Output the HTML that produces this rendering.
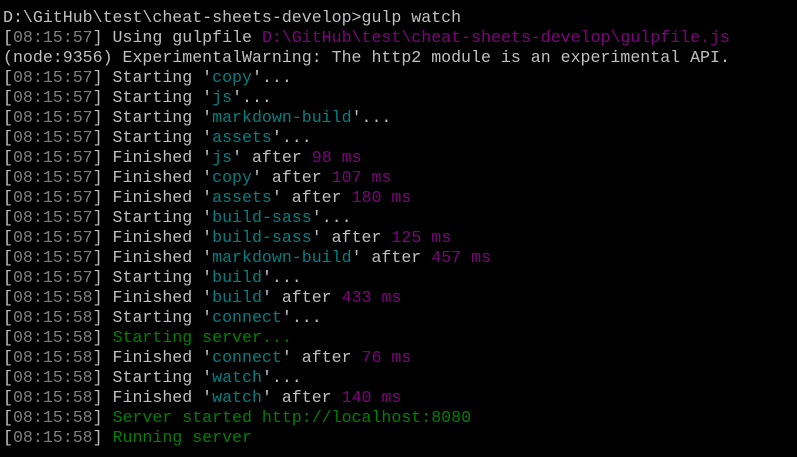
<html><head><style>
body{margin:0;background:#000;width:797px;height:457px;overflow:hidden}
pre{margin:0;position:absolute;left:3px;top:8px;font-family:"Liberation Mono",monospace;font-size:16.6px;line-height:20px;color:#c0c0c0}
.t{color:#808080}.m{color:#800080}.c{color:#008080}.g{color:#008000}
</style></head><body><pre>D:\GitHub\test\cheat-sheets-develop>gulp watch
[<span class="t">08:15:57</span>] Using gulpfile <span class="m">D:\GitHub\test\cheat-sheets-develop\gulpfile.js</span>
(node:9356) ExperimentalWarning: The http2 module is an experimental API.
[<span class="t">08:15:57</span>] Starting '<span class="c">copy</span>'...
[<span class="t">08:15:57</span>] Starting '<span class="c">js</span>'...
[<span class="t">08:15:57</span>] Starting '<span class="c">markdown-build</span>'...
[<span class="t">08:15:57</span>] Starting '<span class="c">assets</span>'...
[<span class="t">08:15:57</span>] Finished '<span class="c">js</span>' after <span class="m">98 ms</span>
[<span class="t">08:15:57</span>] Finished '<span class="c">copy</span>' after <span class="m">107 ms</span>
[<span class="t">08:15:57</span>] Finished '<span class="c">assets</span>' after <span class="m">180 ms</span>
[<span class="t">08:15:57</span>] Starting '<span class="c">build-sass</span>'...
[<span class="t">08:15:57</span>] Finished '<span class="c">build-sass</span>' after <span class="m">125 ms</span>
[<span class="t">08:15:57</span>] Finished '<span class="c">markdown-build</span>' after <span class="m">457 ms</span>
[<span class="t">08:15:57</span>] Starting '<span class="c">build</span>'...
[<span class="t">08:15:58</span>] Finished '<span class="c">build</span>' after <span class="m">433 ms</span>
[<span class="t">08:15:58</span>] Starting '<span class="c">connect</span>'...
[<span class="t">08:15:58</span>] <span class="g">Starting server...</span>
[<span class="t">08:15:58</span>] Finished '<span class="c">connect</span>' after <span class="m">76 ms</span>
[<span class="t">08:15:58</span>] Starting '<span class="c">watch</span>'...
[<span class="t">08:15:58</span>] Finished '<span class="c">watch</span>' after <span class="m">140 ms</span>
[<span class="t">08:15:58</span>] <span class="g">Server started http://localhost:8080</span>
[<span class="t">08:15:58</span>] <span class="g">Running server</span>
</pre></body></html>
